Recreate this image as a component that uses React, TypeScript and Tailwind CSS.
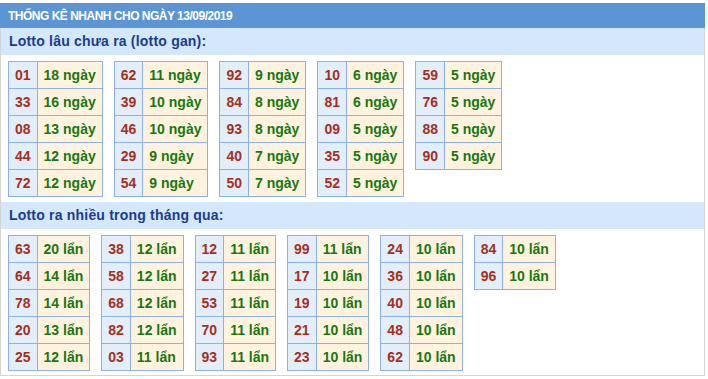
const gan: [string, number][][] = [
  [["01", 18], ["33", 16], ["08", 13], ["44", 12], ["72", 12]],
  [["62", 11], ["39", 10], ["46", 10], ["29", 9], ["54", 9]],
  [["92", 9], ["84", 8], ["93", 8], ["40", 7], ["50", 7]],
  [["10", 6], ["81", 6], ["09", 5], ["35", 5], ["52", 5]],
  [["59", 5], ["76", 5], ["88", 5], ["90", 5]],
];

const nhieu: [string, number][][] = [
  [["63", 20], ["64", 14], ["78", 14], ["20", 13], ["25", 12]],
  [["38", 12], ["58", 12], ["68", 12], ["82", 12], ["03", 11]],
  [["12", 11], ["27", 11], ["53", 11], ["70", 11], ["93", 11]],
  [["99", 11], ["17", 10], ["19", 10], ["21", 10], ["23", 10]],
  [["24", 10], ["36", 10], ["40", 10], ["48", 10], ["62", 10]],
  [["84", 10], ["96", 10]],
];

function StatTable({ rows, unit }: { rows: [string, number][]; unit: string }) {
  return (
    <table className="border-collapse border border-[#8fb0e2] text-[14px] font-bold">
      <tbody>
        {rows.map(([num, count]) => (
          <tr key={num} className="h-[27px]">
            <td className="border border-[#8fb0e2] bg-[#e3eefb] px-[6px] text-[#a5301b]">{num}</td>
            <td className="border border-[#8fb0e2] bg-[#fff3df] px-[6px] text-[#17780f]">
              {count} {unit}
            </td>
          </tr>
        ))}
      </tbody>
    </table>
  );
}

function SubHeader({ children }: { children: React.ReactNode }) {
  return (
    <div className="flex h-[27px] items-center bg-[#d5e7fa] px-[8px] text-[14px] font-bold tracking-[0.2px] text-[#1b3c91]">
      {children}
    </div>
  );
}

export default function App() {
  return (
    <div className="pt-[3px] font-['Liberation_Sans',Arial,sans-serif]">
      <div className="w-[705px] border-x border-b border-[#d4d4d4]">
        <div className="-mx-px flex h-[25px] items-center bg-[#5b95d5] px-[8px] text-[12px] font-bold tracking-[-0.5px] text-white">
          THỐNG KÊ NHANH CHO NGÀY 13/09/2019
        </div>
        <SubHeader>Lotto lâu chưa ra (lotto gan):</SubHeader>
        <div className="flex items-start gap-[11px] px-[7px] pb-[5px] pt-[6px]">
          {gan.map((rows, i) => (
            <StatTable key={i} rows={rows} unit="ngày" />
          ))}
        </div>
        <SubHeader>Lotto ra nhiều trong tháng qua:</SubHeader>
        <div className="flex items-start gap-[11px] px-[7px] pb-[4px] pt-[6px]">
          {nhieu.map((rows, i) => (
            <StatTable key={i} rows={rows} unit="lẩn" />
          ))}
        </div>
      </div>
    </div>
  );
}
